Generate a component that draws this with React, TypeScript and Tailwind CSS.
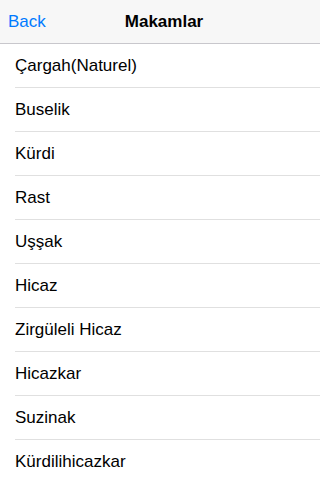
const items = [
  "Çargah(Naturel)",
  "Buselik",
  "Kürdi",
  "Rast",
  "Uşşak",
  "Hicaz",
  "Zirgüleli Hicaz",
  "Hicazkar",
  "Suzinak",
  "Kürdilihicazkar",
];

export default function App() {
  return (
    <div className="h-[480px] w-[320px] overflow-hidden bg-white font-['Liberation_Sans',Arial,sans-serif] text-black">
      <header className="flex h-[44px] items-center border-b border-[#c8c7cc] bg-[#f7f7f7]">
        <div className="flex-1 pl-2 text-[17px] text-[#007aff]">Back</div>
        <div className="text-[17px] font-bold">Makamlar</div>
        <div className="flex-1" />
      </header>
      <ul>
        {items.map((item) => (
          <li key={item} className="pl-[15px]">
            <div className="flex h-[44px] items-center border-b border-[#e0e0e0] text-[17px]">{item}</div>
          </li>
        ))}
      </ul>
    </div>
  );
}
